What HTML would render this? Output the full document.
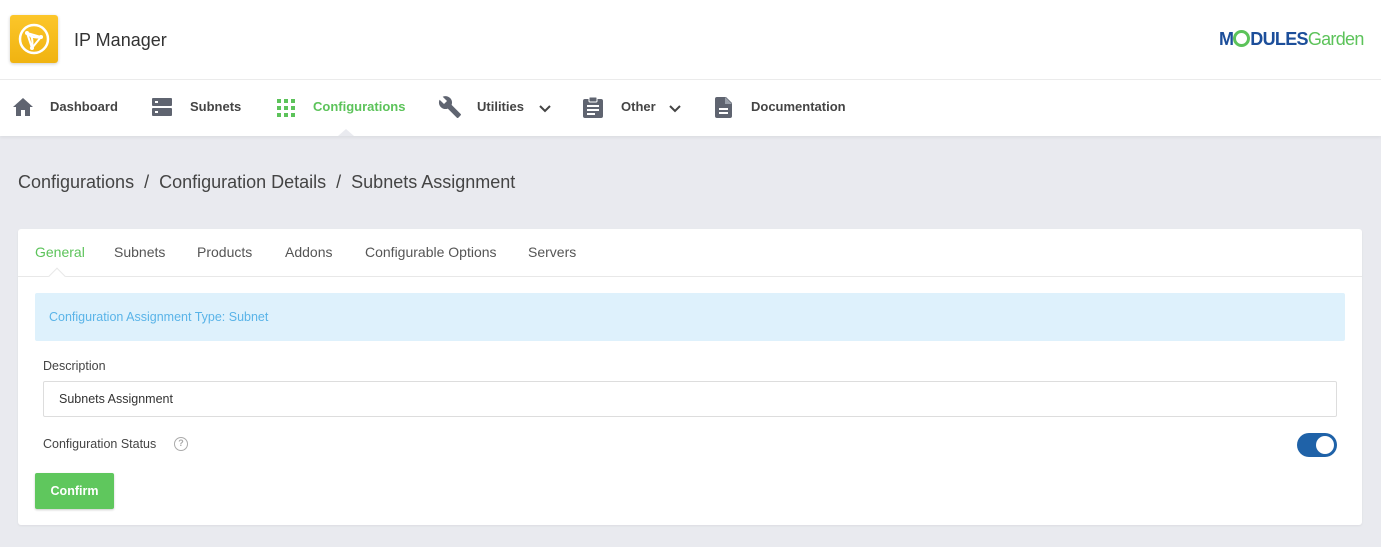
<!DOCTYPE html>
<html><head><meta charset="utf-8"><style>
*{box-sizing:border-box;margin:0;padding:0}
body{width:1381px;height:547px;overflow:hidden;background:#e9eaef;font-family:"Liberation Sans",sans-serif;color:#4a4a4a;position:relative}
.top{position:absolute;left:0;top:0;width:1381px;height:80px;background:#fff;border-bottom:1px solid #ebebeb}
.logo{position:absolute;left:10px;top:15px;width:48px;height:48px;border-radius:3px;background:linear-gradient(#fcc62a,#f0b311);box-shadow:0 1px 3px rgba(0,0,0,.2)}
.title{position:absolute;left:74px;top:30px;font-size:18px;color:#333}
.mg{position:absolute;left:1219px;top:29px;font-size:18px;font-weight:bold;color:#1c4e9a;letter-spacing:-.7px}
.mg span{color:#5cc35a;font-weight:normal}
.nav{position:absolute;left:0;top:80px;width:1381px;height:56px;background:#fff;box-shadow:0 2px 3px rgba(0,0,0,.05)}
.ni{position:absolute;top:0;height:56px;line-height:54px;font-size:13px;font-weight:bold;color:#444}
.ni svg{position:absolute;top:17px}
.caret{position:absolute;left:338px;top:129px;width:0;height:0;border-left:8px solid transparent;border-right:8px solid transparent;border-bottom:7px solid #e9eaef}
.bc{position:absolute;left:18px;top:172px;font-size:18px;color:#444}
.card{position:absolute;left:18px;top:229px;width:1344px;height:296px;background:#fff;border-radius:3px;box-shadow:0 1px 2px rgba(0,0,0,.06)}
.tabs{height:48px;border-bottom:1px solid #e8e8e8;position:relative}
.tab{position:absolute;top:15px;font-size:14px;color:#555}
.tcaret{position:absolute;left:33px;top:41px;width:12px;height:12px;background:#fff;border-left:1px solid #e8e8e8;border-top:1px solid #e8e8e8;transform:rotate(45deg)}
.alert{position:absolute;left:17px;top:64px;width:1310px;height:48px;background:#def1fc;border-radius:2px;color:#5ab4e8;font-size:12.5px;line-height:48px;padding-left:14px}
.lbl{position:absolute;left:25px;font-size:12.5px;color:#444}
.inp{position:absolute;left:25px;top:152px;width:1294px;height:36px;border:1px solid #ddd;border-radius:2px;font-size:12.5px;line-height:34px;padding-left:15px;color:#333}
.q{position:absolute;left:156px;top:208px;width:14px;height:14px;border:1.5px solid #aaa;border-radius:50%;font-size:9px;line-height:11px;text-align:center;color:#aaa;font-weight:bold}
.tog{position:absolute;left:1279px;top:204px;width:40px;height:24px;border-radius:12px;background:#1f62a8}
.tog:after{content:"";position:absolute;right:3px;top:3px;width:18px;height:18px;border-radius:50%;background:#fff}
.btn{position:absolute;left:17px;top:244px;width:79px;height:36px;background:#5fc75d;border-radius:2px;color:#fff;font-weight:bold;font-size:12.5px;text-align:center;line-height:36px;box-shadow:0 1px 2px rgba(0,0,0,.2)}
</style></head><body>
<div class="top">
<div class="logo"><svg width="48" height="48" viewBox="0 0 48 48"><circle cx="24" cy="24" r="14" fill="none" stroke="#fff" stroke-width="2.5"/><path d="M17 18 L31 22 L22 33 Z M17 18 Q24 20 22 33 M31 22 Q22 24 17 18" fill="none" stroke="#fff" stroke-width="2"/><circle cx="17" cy="18" r="2" fill="#fff"/><circle cx="31" cy="22" r="2" fill="#fff"/><circle cx="22" cy="33" r="2" fill="#fff"/></svg></div>
<div class="title">IP Manager</div>
<div class="mg">M<span style="display:inline-block;width:17px;height:17px;border:3px solid #5cc35a;border-radius:50%;vertical-align:-2px"></span>DULES<span>Garden</span></div>
</div>
<div class="nav">
<div class="ni" style="left:12px"><svg width="22" height="20" viewBox="0 0 22 20" style="left:0"><path d="M11 1 L21 10 H18 V19 H13 V13 H9 V19 H4 V10 H1 Z" fill="#5f6470"/></svg><span style="margin-left:38px">Dashboard</span></div>
<div class="ni" style="left:152px"><svg width="20" height="20" viewBox="0 0 20 20" style="left:0"><rect x="0" y="1" width="20" height="8" rx="1" fill="#5f6470"/><rect x="0" y="11" width="20" height="8" rx="1" fill="#5f6470"/><rect x="3" y="4" width="3" height="2" fill="#fff"/><rect x="3" y="14" width="3" height="2" fill="#fff"/></svg><span style="margin-left:38px">Subnets</span></div>
<div class="ni" style="left:277px;color:#5cc35a"><svg width="18" height="18" viewBox="0 0 18 18" style="left:0;top:19px"><g fill="#5cc35a"><rect x="0" y="0" width="4" height="4"/><rect x="7" y="0" width="4" height="4"/><rect x="14" y="0" width="4" height="4"/><rect x="0" y="7" width="4" height="4"/><rect x="7" y="7" width="4" height="4"/><rect x="14" y="7" width="4" height="4"/><rect x="0" y="14" width="4" height="4"/><rect x="7" y="14" width="4" height="4"/><rect x="14" y="14" width="4" height="4"/></g></svg><span style="margin-left:36px">Configurations</span></div>
<div class="ni" style="left:438px"><svg width="24" height="24" viewBox="0 0 24 24" style="left:0;top:15px"><path d="M22.7 19l-9.1-9.1c.9-2.3.4-5-1.5-6.9-2-2-5-2.4-7.4-1.3L9 6 6 9 1.6 4.7C.4 7.1.9 10.1 2.9 12.1c1.9 1.9 4.6 2.4 6.9 1.5l9.1 9.1c.4.4 1 .4 1.4 0l2.3-2.3c.5-.4.5-1.1.1-1.4z" fill="#5f6470"/></svg><span style="margin-left:39px">Utilities</span><svg width="12" height="8" viewBox="0 0 12 8" style="left:101px;top:25px"><path d="M1 1 L6 6 L11 1" fill="none" stroke="#444" stroke-width="2"/></svg></div>
<div class="ni" style="left:583px"><svg width="20" height="22" viewBox="0 0 20 22" style="left:0;top:16px"><rect x="0" y="3" width="20" height="19" rx="2" fill="#5f6470"/><rect x="6" y="1" width="8" height="5" rx="1" fill="#5f6470" stroke="#fff" stroke-width="1"/><rect x="4" y="9" width="12" height="2" fill="#fff"/><rect x="4" y="13" width="12" height="2" fill="#fff"/><rect x="4" y="17" width="8" height="2" fill="#fff"/></svg><span style="margin-left:38px">Other</span><svg width="12" height="8" viewBox="0 0 12 8" style="left:86px;top:25px"><path d="M1 1 L6 6 L11 1" fill="none" stroke="#444" stroke-width="2"/></svg></div>
<div class="ni" style="left:715px"><svg width="17" height="21" viewBox="0 0 17 21" style="left:0;top:17px"><path d="M2 0 H11 L17 6 V19 a2 2 0 0 1 -2 2 H2 a2 2 0 0 1 -2 -2 V2 a2 2 0 0 1 2 -2z" fill="#5f6470"/><path d="M10 0 V7 H17" fill="#9aa0aa"/><rect x="4" y="11" width="9" height="2" fill="#fff"/><rect x="4" y="15" width="9" height="2" fill="#fff"/></svg><span style="margin-left:36px">Documentation</span></div>
</div>
<div class="caret"></div>
<div class="bc">Configurations &nbsp;/&nbsp; Configuration Details &nbsp;/&nbsp; Subnets Assignment</div>
<div class="card">
<div class="tabs">
<div class="tab" style="left:17px;color:#5cc35a">General</div>
<div class="tab" style="left:96px">Subnets</div>
<div class="tab" style="left:179px">Products</div>
<div class="tab" style="left:267px">Addons</div>
<div class="tab" style="left:347px">Configurable Options</div>
<div class="tab" style="left:510px">Servers</div>
<div class="tcaret"></div>
</div>
<div class="alert">Configuration Assignment Type: Subnet</div>
<div class="lbl" style="top:130px">Description</div>
<div class="inp">Subnets Assignment</div>
<div class="lbl" style="top:208px">Configuration Status</div>
<div class="q">?</div>
<div class="tog"></div>
<div class="btn">Confirm</div>
</div>
</body></html>
